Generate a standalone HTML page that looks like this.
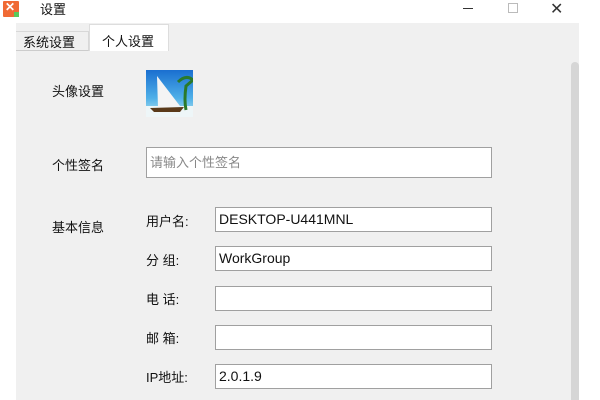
<!DOCTYPE html>
<html><head><meta charset="utf-8"><style>
*{margin:0;padding:0;box-sizing:border-box}
body{width:600px;height:400px;background:#fff;position:relative;overflow:hidden;font-family:"Liberation Sans","Noto Sans CJK SC",sans-serif;font-size:13px;color:#111}
.a{position:absolute}
.in{position:absolute;background:#fff;border:1px solid #a0a0a0;height:25px;padding-left:3px;line-height:23px;font-size:14px}
.lb{position:absolute;font-size:13px}
</style></head><body>
<div class="a" style="left:3px;top:1px;width:16px;height:16px;background:#f06a35;border-radius:1px"></div>
<div class="a" style="left:5px;top:0px;color:#fff;font-size:12px;font-weight:bold">✕</div>
<div class="a" style="left:14px;top:12px;width:5px;height:5px;background:#5ac85a"></div>
<div class="a" style="left:40px;top:-1px;font-size:13px">设置</div>
<div class="a" style="left:463px;top:8px;width:10px;height:1px;background:#333"></div>
<div class="a" style="left:508px;top:3px;width:10px;height:10px;border:1px solid #bbb"></div>
<div class="a" style="left:550px;top:-1px;font-size:16px;color:#333">✕</div>
<div class="a" style="left:16px;top:23px;width:563px;height:377px;background:#f0f0f0"></div>
<div class="a" style="left:16px;top:31px;width:73px;height:20px;background:#f0f0f0;border:1px solid #d8d8d8;border-left:none;border-bottom:1px solid #ccc"></div>
<div class="a" style="left:23px;top:32px">系统设置</div>
<div class="a" style="left:89px;top:24px;width:80px;height:27px;background:#fff;border:1px solid #ddd;border-bottom:none"></div>
<div class="a" style="left:102px;top:31px">个人设置</div>
<div class="a" style="left:571px;top:62px;width:8px;height:338px;background:#d6d6d6;border-radius:4px 4px 0 0"></div>
<div class="lb" style="left:52px;top:81px">头像设置</div>
<svg class="a" style="left:146px;top:70px" width="47" height="47">
<defs><linearGradient id="g" x1="0" y1="0" x2="0" y2="1"><stop offset="0" stop-color="#1a6fd0"/><stop offset=".6" stop-color="#4fb0e8"/><stop offset="1" stop-color="#bfe8f0"/></linearGradient></defs>
<rect width="47" height="47" fill="url(#g)"/><rect y="36" width="47" height="11" fill="#eef6f8"/>
<path d="M11 6 L12 38 L34 36 Z" fill="#f4f4f4"/><path d="M4 38 L38 37 L34 42 L8 42Z" fill="#5a3a1a"/>
<path d="M32 12 Q40 4 47 10 L40 16 Q38 30 40 40" stroke="#2a7a2a" stroke-width="3" fill="none"/>
</svg>
<div class="lb" style="left:52px;top:155px">个性签名</div>
<div class="in" style="left:146px;top:147px;width:346px;height:31px;line-height:29px;color:#888;font-size:13px">请输入个性签名</div>
<div class="lb" style="left:52px;top:217px">基本信息</div>
<div class="lb" style="left:146px;top:211px">用户名:</div>
<div class="in" style="left:215px;top:207px;width:277px">DESKTOP-U441MNL</div>
<div class="lb" style="left:146px;top:250px">分 组:</div>
<div class="in" style="left:215px;top:246px;width:277px">WorkGroup</div>
<div class="lb" style="left:146px;top:289px">电 话:</div>
<div class="in" style="left:215px;top:286px;width:277px"></div>
<div class="lb" style="left:146px;top:328px">邮 箱:</div>
<div class="in" style="left:215px;top:325px;width:277px"></div>
<div class="lb" style="left:146px;top:367px">IP地址:</div>
<div class="in" style="left:215px;top:364px;width:277px">2.0.1.9</div>
</body></html>
